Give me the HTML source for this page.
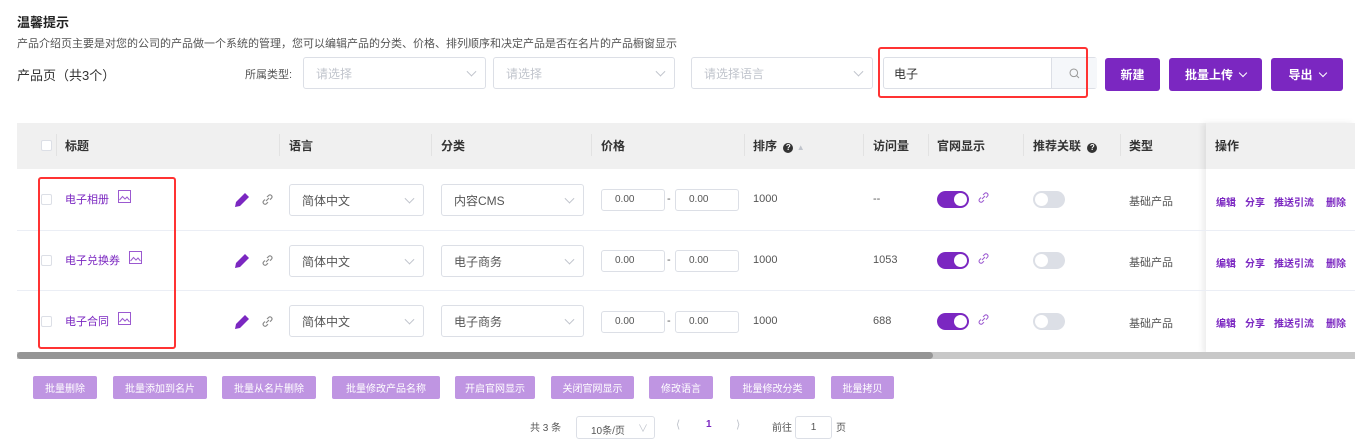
<!DOCTYPE html>
<html><head><meta charset="utf-8"><style>
*{box-sizing:border-box;margin:0;padding:0}
body{width:1355px;height:444px;overflow:hidden;background:#fff;font-family:"Liberation Sans","Noto Sans CJK SC",sans-serif;color:#333;position:relative}
.a{position:absolute}
.sel{position:absolute;border:1px solid #dcdfe6;border-radius:3px;background:#fff;font-size:12px;color:#c0c4cc;padding-left:12px;display:flex;align-items:center}
.sel .ch{position:absolute;right:10px;top:50%;width:7px;height:7px;border-right:1px solid #c0c4cc;border-bottom:1px solid #c0c4cc;transform:translateY(-70%) rotate(45deg)}
.btn{position:absolute;background:#7b27c1;color:#fff;border-radius:3px;font-size:12px;display:flex;align-items:center;justify-content:center;font-weight:bold}
.th{position:absolute;top:137px;font-size:12px;font-weight:bold;color:#333}
.dv{position:absolute;top:134px;width:1px;height:22px;background:#e2e2e2}
.cell{position:absolute;font-size:11px;color:#555}
.cb{position:absolute;width:11px;height:11px;border:1px solid #dcdfe6;background:#fff;border-radius:2px}
.ttl{position:absolute;font-size:11px;color:#7b27c1}
.pi{position:absolute;width:64px;height:22px;border:1px solid #dcdfe6;border-radius:3px;font-size:10px;color:#555;padding-left:13px;line-height:20px}
.tg{position:absolute;width:32px;height:17px;border-radius:9px}
.tg i{position:absolute;top:2px;width:13px;height:13px;border-radius:50%;background:#fff}
.op{position:absolute;font-size:10px;color:#7b27c1;font-weight:bold}
.bb{position:absolute;top:376px;height:23px;background:#bf95e2;color:#fff;font-size:10px;border-radius:2px;display:flex;align-items:center;justify-content:center}
.rl{position:absolute;left:17px;width:1190px;height:1px;background:#ebeef5}
.bch{display:inline-block;width:6px;height:6px;border-right:1px solid #fff;border-bottom:1px solid #fff;transform:rotate(45deg);margin:0 0 3px 7px}
</style></head><body>
<div class="a" style="left:17px;top:12px;font-size:13px;font-weight:bold;color:#222">温馨提示</div>
<div class="a" style="left:17px;top:35px;font-size:11px;color:#555">产品介绍页主要是对您的公司的产品做一个系统的管理，您可以编辑产品的分类、价格、排列顺序和决定产品是否在名片的产品橱窗显示</div>
<div class="a" style="left:17px;top:65px;font-size:13px;color:#333">产品页（共3个）</div>
<div class="a" style="left:245px;top:66px;font-size:11px;color:#555">所属类型:</div>
<div class="sel" style="left:303px;top:57px;width:183px;height:32px">请选择<span class="ch"></span></div>
<div class="sel" style="left:493px;top:57px;width:182px;height:32px">请选择<span class="ch"></span></div>
<div class="sel" style="left:691px;top:57px;width:182px;height:32px">请选择语言<span class="ch"></span></div>
<div class="sel" style="left:883px;top:57px;width:214px;height:32px;color:#333;padding-left:10px">电子
<div class="a" style="left:167px;top:0;width:46px;height:30px;background:#f5f7fa;border-left:1px solid #dcdfe6"><svg class="a" style="left:17px;top:10px" width="11" height="11" viewBox="0 0 11 11"><circle cx="4.8" cy="4.8" r="3.8" fill="none" stroke="#999" stroke-width="1"/><path d="M7.6 7.6L10 10" stroke="#999"/></svg></div></div>
<div class="a" style="left:878px;top:47px;width:210px;height:51px;border:2px solid #f33;border-radius:3px"></div>
<div class="btn" style="left:1105px;top:58px;width:55px;height:33px">新建</div>
<div class="btn" style="left:1169px;top:58px;width:93px;height:33px">批量上传<span class="bch"></span></div>
<div class="btn" style="left:1271px;top:58px;width:72px;height:33px">导出<span class="bch"></span></div>

<div class="a" style="left:17px;top:123px;width:1338px;height:46px;background:#f0f0f0"></div>
<div class="cb" style="left:41px;top:140px"></div>
<div class="dv" style="left:56px"></div>
<div class="th" style="left:65px">标题</div>
<div class="dv" style="left:279px"></div><div class="th" style="left:289px">语言</div>
<div class="dv" style="left:431px"></div><div class="th" style="left:441px">分类</div>
<div class="dv" style="left:591px"></div><div class="th" style="left:601px">价格</div>
<div class="dv" style="left:744px"></div><div class="th" style="left:753px">排序 <span style="display:inline-block;width:10px;height:10px;border-radius:50%;background:#333;color:#fff;font-size:8px;text-align:center;line-height:10px;margin-left:3px">?</span> <span style="color:#c0c4cc;font-size:8px">&#9650;</span></div>
<div class="dv" style="left:863px"></div><div class="th" style="left:873px">访问量</div>
<div class="dv" style="left:928px"></div><div class="th" style="left:937px">官网显示</div>
<div class="dv" style="left:1023px"></div><div class="th" style="left:1033px">推荐关联 <span style="display:inline-block;width:10px;height:10px;border-radius:50%;background:#333;color:#fff;font-size:8px;text-align:center;line-height:10px;margin-left:3px">?</span></div>
<div class="dv" style="left:1120px"></div><div class="th" style="left:1129px">类型</div>
<div class="a" style="left:1206px;top:123px;width:149px;height:231px;box-shadow:-3px 0 6px rgba(0,0,0,0.08)"></div>
<div class="th" style="left:1215px">操作</div>

<div class="rl" style="top:230px"></div><div class="rl" style="top:290px"></div>
<div class="a" style="left:1207px;top:230px;width:148px;height:1px;background:#ebeef5"></div>
<div class="a" style="left:1207px;top:290px;width:148px;height:1px;background:#ebeef5"></div>

<div class="cb" style="left:41px;top:194px"></div>
<div class="ttl" style="left:65px;top:191px">电子相册</div>
<svg class="a" style="left:118px;top:190px" width="13" height="13" viewBox="0 0 13 13"><rect x="0.5" y="0.5" width="12" height="12" fill="none" stroke="#9b59d0"/><path d="M1.5 10L4.5 6.5L7 9L9 7L11.5 10" fill="none" stroke="#9b59d0"/></svg>
<div class="cb" style="left:41px;top:255px"></div>
<div class="ttl" style="left:65px;top:252px">电子兑换券</div>
<svg class="a" style="left:129px;top:251px" width="13" height="13" viewBox="0 0 13 13"><rect x="0.5" y="0.5" width="12" height="12" fill="none" stroke="#9b59d0"/><path d="M1.5 10L4.5 6.5L7 9L9 7L11.5 10" fill="none" stroke="#9b59d0"/></svg>
<div class="cb" style="left:41px;top:316px"></div>
<div class="ttl" style="left:65px;top:313px">电子合同</div>
<svg class="a" style="left:118px;top:312px" width="13" height="13" viewBox="0 0 13 13"><rect x="0.5" y="0.5" width="12" height="12" fill="none" stroke="#9b59d0"/><path d="M1.5 10L4.5 6.5L7 9L9 7L11.5 10" fill="none" stroke="#9b59d0"/></svg>

<svg class="a" style="left:233px;top:191px" width="18" height="18" viewBox="0 0 18 18"><path d="M2 16L3 11L12 2L16 6L7 15Z" fill="#7b27c1"/></svg>
<svg class="a" style="left:233px;top:252px" width="18" height="18" viewBox="0 0 18 18"><path d="M2 16L3 11L12 2L16 6L7 15Z" fill="#7b27c1"/></svg>
<svg class="a" style="left:233px;top:313px" width="18" height="18" viewBox="0 0 18 18"><path d="M2 16L3 11L12 2L16 6L7 15Z" fill="#7b27c1"/></svg>
<svg class="a" style="left:261px;top:193px" width="13" height="13" viewBox="0 0 13 13"><path d="M5 8L8 5 M4 6.5L2.5 8a2 2 0 0 0 2.8 2.8L7 9.2 M6 4L7.8 2.3a2 2 0 0 1 2.8 2.8L9 6.7" fill="none" stroke="#888" stroke-width="1.1"/></svg>
<svg class="a" style="left:261px;top:254px" width="13" height="13" viewBox="0 0 13 13"><path d="M5 8L8 5 M4 6.5L2.5 8a2 2 0 0 0 2.8 2.8L7 9.2 M6 4L7.8 2.3a2 2 0 0 1 2.8 2.8L9 6.7" fill="none" stroke="#888" stroke-width="1.1"/></svg>
<svg class="a" style="left:261px;top:315px" width="13" height="13" viewBox="0 0 13 13"><path d="M5 8L8 5 M4 6.5L2.5 8a2 2 0 0 0 2.8 2.8L7 9.2 M6 4L7.8 2.3a2 2 0 0 1 2.8 2.8L9 6.7" fill="none" stroke="#888" stroke-width="1.1"/></svg>

<div class="sel" style="left:289px;top:184px;width:135px;height:32px;color:#555">简体中文<span class="ch"></span></div>
<div class="sel" style="left:289px;top:245px;width:135px;height:32px;color:#555">简体中文<span class="ch"></span></div>
<div class="sel" style="left:289px;top:305px;width:135px;height:32px;color:#555">简体中文<span class="ch"></span></div>
<div class="sel" style="left:441px;top:184px;width:143px;height:32px;color:#555">内容CMS<span class="ch"></span></div>
<div class="sel" style="left:441px;top:245px;width:143px;height:32px;color:#555">电子商务<span class="ch"></span></div>
<div class="sel" style="left:441px;top:305px;width:143px;height:32px;color:#555">电子商务<span class="ch"></span></div>

<div class="pi" style="left:601px;top:189px">0.00</div><div class="cell" style="left:667px;top:193px">-</div><div class="pi" style="left:675px;top:189px">0.00</div>
<div class="pi" style="left:601px;top:250px">0.00</div><div class="cell" style="left:667px;top:254px">-</div><div class="pi" style="left:675px;top:250px">0.00</div>
<div class="pi" style="left:601px;top:311px">0.00</div><div class="cell" style="left:667px;top:315px">-</div><div class="pi" style="left:675px;top:311px">0.00</div>

<div class="cell" style="left:753px;top:193px">1000</div>
<div class="cell" style="left:753px;top:254px">1000</div>
<div class="cell" style="left:753px;top:315px">1000</div>
<div class="cell" style="left:873px;top:193px">--</div>
<div class="cell" style="left:873px;top:254px">1053</div>
<div class="cell" style="left:873px;top:315px">688</div>

<div class="tg" style="left:937px;top:191px;background:#7b27c1"><i style="left:17px"></i></div>
<div class="tg" style="left:937px;top:252px;background:#7b27c1"><i style="left:17px"></i></div>
<div class="tg" style="left:937px;top:313px;background:#7b27c1"><i style="left:17px"></i></div>
<svg class="a" style="left:977px;top:191px" width="13" height="13" viewBox="0 0 13 13"><path d="M5 8L8 5 M4 6.5L2.5 8a2 2 0 0 0 2.8 2.8L7 9.2 M6 4L7.8 2.3a2 2 0 0 1 2.8 2.8L9 6.7" fill="none" stroke="#9b59d0" stroke-width="1"/></svg>
<svg class="a" style="left:977px;top:252px" width="13" height="13" viewBox="0 0 13 13"><path d="M5 8L8 5 M4 6.5L2.5 8a2 2 0 0 0 2.8 2.8L7 9.2 M6 4L7.8 2.3a2 2 0 0 1 2.8 2.8L9 6.7" fill="none" stroke="#9b59d0" stroke-width="1"/></svg>
<svg class="a" style="left:977px;top:313px" width="13" height="13" viewBox="0 0 13 13"><path d="M5 8L8 5 M4 6.5L2.5 8a2 2 0 0 0 2.8 2.8L7 9.2 M6 4L7.8 2.3a2 2 0 0 1 2.8 2.8L9 6.7" fill="none" stroke="#9b59d0" stroke-width="1"/></svg>
<div class="tg" style="left:1033px;top:191px;background:#dcdfe6"><i style="left:2px"></i></div>
<div class="tg" style="left:1033px;top:252px;background:#dcdfe6"><i style="left:2px"></i></div>
<div class="tg" style="left:1033px;top:313px;background:#dcdfe6"><i style="left:2px"></i></div>

<div class="cell" style="left:1129px;top:193px">基础产品</div>
<div class="cell" style="left:1129px;top:254px">基础产品</div>
<div class="cell" style="left:1129px;top:315px">基础产品</div>

<div class="op" style="left:1216px;top:194px">编辑</div><div class="op" style="left:1245px;top:194px">分享</div><div class="op" style="left:1274px;top:194px">推送引流</div><div class="op" style="left:1326px;top:194px">删除</div>
<div class="op" style="left:1216px;top:255px">编辑</div><div class="op" style="left:1245px;top:255px">分享</div><div class="op" style="left:1274px;top:255px">推送引流</div><div class="op" style="left:1326px;top:255px">删除</div>
<div class="op" style="left:1216px;top:315px">编辑</div><div class="op" style="left:1245px;top:315px">分享</div><div class="op" style="left:1274px;top:315px">推送引流</div><div class="op" style="left:1326px;top:315px">删除</div>

<div class="a" style="left:38px;top:177px;width:138px;height:172px;border:2px solid #f33;border-radius:3px"></div>

<div class="a" style="left:17px;top:352px;width:1338px;height:7px;background:#c8c8c8"></div>
<div class="a" style="left:17px;top:352px;width:916px;height:7px;background:#959595;border-radius:4px"></div>

<div class="bb" style="left:33px;width:64px">批量删除</div>
<div class="bb" style="left:113px;width:94px">批量添加到名片</div>
<div class="bb" style="left:222px;width:94px">批量从名片删除</div>
<div class="bb" style="left:332px;width:108px">批量修改产品名称</div>
<div class="bb" style="left:455px;width:80px">开启官网显示</div>
<div class="bb" style="left:551px;width:83px">关闭官网显示</div>
<div class="bb" style="left:649px;width:64px">修改语言</div>
<div class="bb" style="left:730px;width:85px">批量修改分类</div>
<div class="bb" style="left:831px;width:63px">批量拷贝</div>

<div class="a" style="left:530px;top:419px;font-size:10px;color:#555">共 3 条</div>
<div class="a" style="left:576px;top:416px;width:79px;height:23px;border:1px solid #dcdfe6;border-radius:3px;font-size:10px;color:#555;padding:5px 0 0 14px">10条/页<span style="position:absolute;right:6px;top:3px;color:#c0c4cc">&#8744;</span></div>
<div class="a" style="left:676px;top:418px;font-size:11px;color:#c0c4cc">&#10216;</div>
<div class="a" style="left:706px;top:419px;font-size:10px;color:#7b27c1;font-weight:bold">1</div>
<div class="a" style="left:736px;top:418px;font-size:11px;color:#c0c4cc">&#10217;</div>
<div class="a" style="left:772px;top:419px;font-size:10px;color:#555">前往</div>
<div class="a" style="left:795px;top:416px;width:37px;height:23px;border:1px solid #dcdfe6;border-radius:3px;font-size:10px;color:#555;text-align:center;line-height:21px">1</div>
<div class="a" style="left:836px;top:419px;font-size:10px;color:#555">页</div>
</body></html>
